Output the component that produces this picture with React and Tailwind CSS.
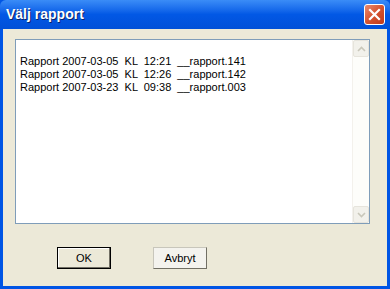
export default function App() {
  const rows = [
    ["2007-03-05", "12:21", "__rapport.141"],
    ["2007-03-05", "12:26", "__rapport.142"],
    ["2007-03-23", "09:38", "__rapport.003"],
  ];
  return (
    <div className="w-[390px] h-[289px] flex flex-col bg-[#0055e5] overflow-hidden" style={{ fontFamily: '"Liberation Sans", Arial, sans-serif' }}>
      <div className="h-[29px] flex items-center justify-between pl-[6px] pr-[5px] bg-gradient-to-b from-[#3a8cf7] via-[#0258e5] to-[#0150d8] rounded-t-[6px]">
        <span className="text-white font-bold text-[14px] [text-shadow:1px_1px_0_#0a246a]">Välj rapport</span>
        <div className="w-[21px] h-[21px] rounded-[3px] border border-white bg-gradient-to-br from-[#e98a6e] via-[#d5532f] to-[#c1391a] flex items-center justify-center">
          <svg width="13" height="13" viewBox="0 0 13 13">
            <path d="M2 2 L11 11 M11 2 L2 11" stroke="white" strokeWidth="2.2" strokeLinecap="square" />
          </svg>
        </div>
      </div>
      <div className="flex-1 mx-[3px] mb-[3px] bg-[#ece9d8] flex flex-col pt-[10px] pl-[12px] pr-[17px]">
        <div className="h-[185px] border border-[#7f9db9] bg-white flex">
          <div className="flex-1 pt-[15px] pl-[4px] text-[11px] leading-[13px] text-black">
            {rows.map((r, i) => (
              <div key={i} className="whitespace-pre">{`Rapport ${r[0]}  KL  ${r[1]}  ${r[2]}`}</div>
            ))}
          </div>
          <div className="w-[17px] flex flex-col bg-[#fdfdfa] border-l border-[#f3f1ec]">
            <div className="h-[17px] border border-[#e6e4dc] rounded-[2px] bg-[#f2f1eb] flex items-center justify-center">
              <svg width="9" height="6" viewBox="0 0 9 6"><path d="M1 5 L4.5 1.5 L8 5" stroke="#c9c7ba" strokeWidth="1.6" fill="none" /></svg>
            </div>
            <div className="flex-1" />
            <div className="h-[17px] border border-[#e6e4dc] rounded-[2px] bg-[#f2f1eb] flex items-center justify-center">
              <svg width="9" height="6" viewBox="0 0 9 6"><path d="M1 1 L4.5 4.5 L8 1" stroke="#c9c7ba" strokeWidth="1.6" fill="none" /></svg>
            </div>
          </div>
        </div>
        <div className="flex pt-[23px] pl-[42px] gap-[42px]">
          <button className="w-[54px] h-[22px] border border-black bg-[#ece9d8] shadow-[inset_-1px_-1px_0_#716f64,inset_1px_1px_0_#fff] text-[11px] text-black flex items-center justify-center">OK</button>
          <button className="w-[54px] h-[22px] border border-[#c8c6bb] border-b-[#716f64] border-r-[#716f64] bg-[#f4f3ee] text-[11px] text-black flex items-center justify-center">Avbryt</button>
        </div>
      </div>
    </div>
  );
}
